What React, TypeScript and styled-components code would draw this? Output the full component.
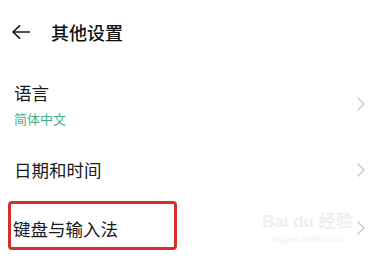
import React from "react";
import styled, { createGlobalStyle } from "styled-components";

const Global = createGlobalStyle`
  html, body { margin: 0; padding: 0; background: #ffffff; }
  body { font-family: "Noto Sans CJK SC", "Noto Sans", sans-serif; color: #1a1a1a; }
`;

const Page = styled.div`
  position: relative;
  width: 379px;
  height: 260px;
  overflow: hidden;
  background: #fff;
`;

const Header = styled.div`
  height: 64px;
  display: flex;
  align-items: center;
  padding-left: 12px;
  gap: 21px;
`;

const Title = styled.div`
  font-size: 18px;
  font-weight: 500;
  line-height: 22px;
  color: #111;
`;

const Row = styled.div<{ $h: number; $pl?: number; $align?: string }>`
  height: ${(p) => p.$h}px;
  display: flex;
  align-items: ${(p) => p.$align ?? "center"};
  justify-content: space-between;
  padding-left: ${(p) => p.$pl ?? 14}px;
  padding-right: 14px;
  box-sizing: border-box;
`;

const TextCol = styled.div`
  display: flex;
  flex-direction: column;
  gap: 6px;
  padding-top: 18px;
`;

const Label = styled.div`
  font-size: 17.5px;
  line-height: 22px;
  color: #1a1a1a;
`;

const Sub = styled.div`
  font-size: 13px;
  line-height: 18px;
  color: #3fb08f;
`;

const ChevronWrap = styled.div<{ $top?: number }>`
  display: flex;
  align-items: center;
  margin-top: ${(p) => p.$top ?? 0}px;
`;

const Highlight = styled.div`
  width: 169px;
  height: 49px;
  margin-top: 1px;
  box-sizing: border-box;
  border: 3px solid #d3302b;
  border-radius: 4px;
  display: flex;
  align-items: center;
  padding-left: 2px;
  padding-top: 7px;
`;

const Watermark = styled.div`
  position: absolute;
  left: 262px;
  top: 211px;
  display: flex;
  flex-direction: column;
  align-items: center;
  pointer-events: none;
`;

const WmMain = styled.div`
  font-family: "Liberation Sans", "Noto Sans CJK SC", sans-serif;
  font-size: 17px;
  line-height: 22px;
  color: #efefef;
  font-weight: 700;
`;

const WmSub = styled.div`
  font-family: "Liberation Sans", sans-serif;
  font-size: 9px;
  line-height: 12px;
  color: #f0f0f0;
`;

const Chevron = () => (
  <svg width="8" height="14" viewBox="0 0 8 14">
    <polyline
      points="1,1 7,7 1,13"
      fill="none"
      stroke="#c6c6c6"
      strokeWidth="1.4"
      strokeLinecap="round"
      strokeLinejoin="round"
    />
  </svg>
);

const BackArrow = () => (
  <svg width="18" height="14" viewBox="0 0 18 14">
    <path
      d="M1 7 H17.5 M7.5 0.8 L1 7 L7.5 13.2"
      fill="none"
      stroke="#1a1a1a"
      strokeWidth="1.6"
      strokeLinecap="round"
      strokeLinejoin="round"
    />
  </svg>
);

export default function App() {
  return (
    <Page>
      <Global />
      <Header>
        <BackArrow />
        <Title>其他设置</Title>
      </Header>
      <Row $h={76} $align="flex-start">
        <TextCol>
          <Label>语言</Label>
          <Sub>简体中文</Sub>
        </TextCol>
        <ChevronWrap $top={33}>
          <Chevron />
        </ChevronWrap>
      </Row>
      <Row $h={60}>
        <Label>日期和时间</Label>
        <ChevronWrap>
          <Chevron />
        </ChevronWrap>
      </Row>
      <Row $h={58} $pl={8} $align="flex-start">
        <Highlight>
          <Label>键盘与输入法</Label>
        </Highlight>
        <ChevronWrap $top={21}>
          <Chevron />
        </ChevronWrap>
      </Row>
      <Watermark>
        <WmMain>Bai du 经验</WmMain>
        <WmSub>jingyan.baidu.com</WmSub>
      </Watermark>
    </Page>
  );
}
